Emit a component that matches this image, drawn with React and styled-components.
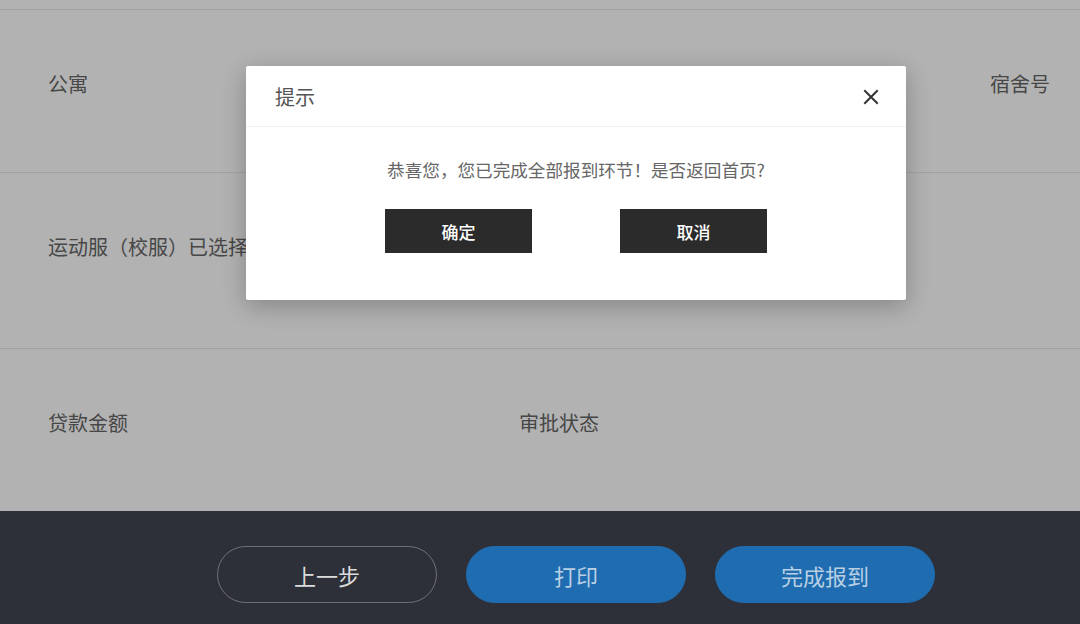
import React from 'react';
import styled, { createGlobalStyle } from 'styled-components';

const GlobalStyle = createGlobalStyle`
  html, body {
    margin: 0;
    padding: 0;
    overflow: hidden;
    background: #ffffff;
  }
  body {
    font-family: "Noto Sans CJK SC", "Noto Sans", sans-serif;
  }
`;

const SHIFT = 72;

const Page = styled.div`
  position: relative;
  width: 1080px;
  height: 624px;
  display: flex;
  flex-direction: column;
  background: #ffffff;
  overflow: hidden;
`;

const Content = styled.div`
  flex: 1;
  padding-top: 9px;
  overflow: hidden;
`;

const Row = styled.div`
  display: grid;
  grid-template-columns: 471px 471px 1fr;
  height: ${(p) => p.height}px;
  padding: 60px 0 0 48px;
  border-top: 1px solid #e9e9e9;
  box-sizing: content-box;
`;

const Label = styled.span`
  font-size: 20px;
  line-height: 28px;
  color: #666666;
  white-space: nowrap;
  overflow: hidden;
`;

const Footer = styled.div`
  position: relative;
  z-index: 2;
  height: 113px;
  box-sizing: border-box;
  padding: 35px 0 0 ${SHIFT}px;
  background: #2e3039;
  display: flex;
  justify-content: center;
  gap: 29px;
`;

const PillButton = styled.button`
  width: 220px;
  height: 57px;
  border-radius: 29px;
  font-family: inherit;
  font-size: 22px;
  cursor: pointer;
  border: 1px solid ${(p) => (p.$outline ? '#707177' : '#1f6db0')};
  background: ${(p) => (p.$outline ? 'transparent' : '#1f6db0')};
  color: ${(p) => (p.$outline ? '#dcdcdc' : '#b9cfe4')};
`;

const Overlay = styled.div`
  position: absolute;
  inset: 0;
  z-index: 1;
  background: rgba(0, 0, 0, 0.3);
  display: flex;
  justify-content: center;
  align-items: flex-start;
  padding: 66px 0 0 ${SHIFT}px;
`;

const Modal = styled.div`
  width: 660px;
  flex-shrink: 0;
  background: #ffffff;
  border-radius: 2px;
  box-shadow: 0 6px 24px rgba(0, 0, 0, 0.25);
`;

const ModalHeader = styled.div`
  height: 60px;
  padding: 0 26px 0 29px;
  display: flex;
  align-items: center;
  justify-content: space-between;
  border-bottom: 1px solid #f0f0f0;
`;

const ModalTitle = styled.span`
  font-size: 20px;
  color: #555555;
`;

const CloseButton = styled.button`
  border: none;
  background: none;
  padding: 0;
  width: 18px;
  height: 18px;
  display: flex;
  align-items: center;
  justify-content: center;
  cursor: pointer;
  margin-top: 2px;
`;

const ModalBody = styled.div`
  padding: 33px 0 47px;
  display: flex;
  flex-direction: column;
  align-items: center;
`;

const Message = styled.p`
  margin: 0 0 29px;
  font-size: 17.6px;
  line-height: 20px;
  color: #666666;
`;

const ButtonRow = styled.div`
  display: flex;
  gap: 88px;
`;

const DarkButton = styled.button`
  width: 147px;
  height: 44px;
  border: none;
  border-radius: 0;
  background: #2b2b2b;
  color: #ffffff;
  font-family: inherit;
  font-size: 17px;
  font-weight: 500;
  cursor: pointer;
`;

const rows = [
  { height: 102, cells: ['公寓', '', '宿舍号'] },
  { height: 115, cells: ['运动服（校服）已选择尺码', '', ''] },
  { height: 102, cells: ['贷款金额', '审批状态', ''] },
];

const App = () => (
  <Page>
    <GlobalStyle />
    <Content>
      {rows.map((row) => (
        <Row key={row.cells[0]} height={row.height}>
          {row.cells.map((c, i) => (
            <Label key={i}>{c}</Label>
          ))}
        </Row>
      ))}
    </Content>
    <Footer>
      <PillButton $outline type="button">上一步</PillButton>
      <PillButton type="button">打印</PillButton>
      <PillButton type="button">完成报到</PillButton>
    </Footer>
    <Overlay>
      <Modal>
        <ModalHeader>
          <ModalTitle>提示</ModalTitle>
          <CloseButton type="button" aria-label="close">
            <svg width="16" height="16" viewBox="0 0 16 16">
              <path d="M2 2 L14 14 M14 2 L2 14" stroke="#333" strokeWidth="2" strokeLinecap="square" />
            </svg>
          </CloseButton>
        </ModalHeader>
        <ModalBody>
          <Message>恭喜您，您已完成全部报到环节！是否返回首页?</Message>
          <ButtonRow>
            <DarkButton type="button">确定</DarkButton>
            <DarkButton type="button">取消</DarkButton>
          </ButtonRow>
        </ModalBody>
      </Modal>
    </Overlay>
  </Page>
);

export default App;
